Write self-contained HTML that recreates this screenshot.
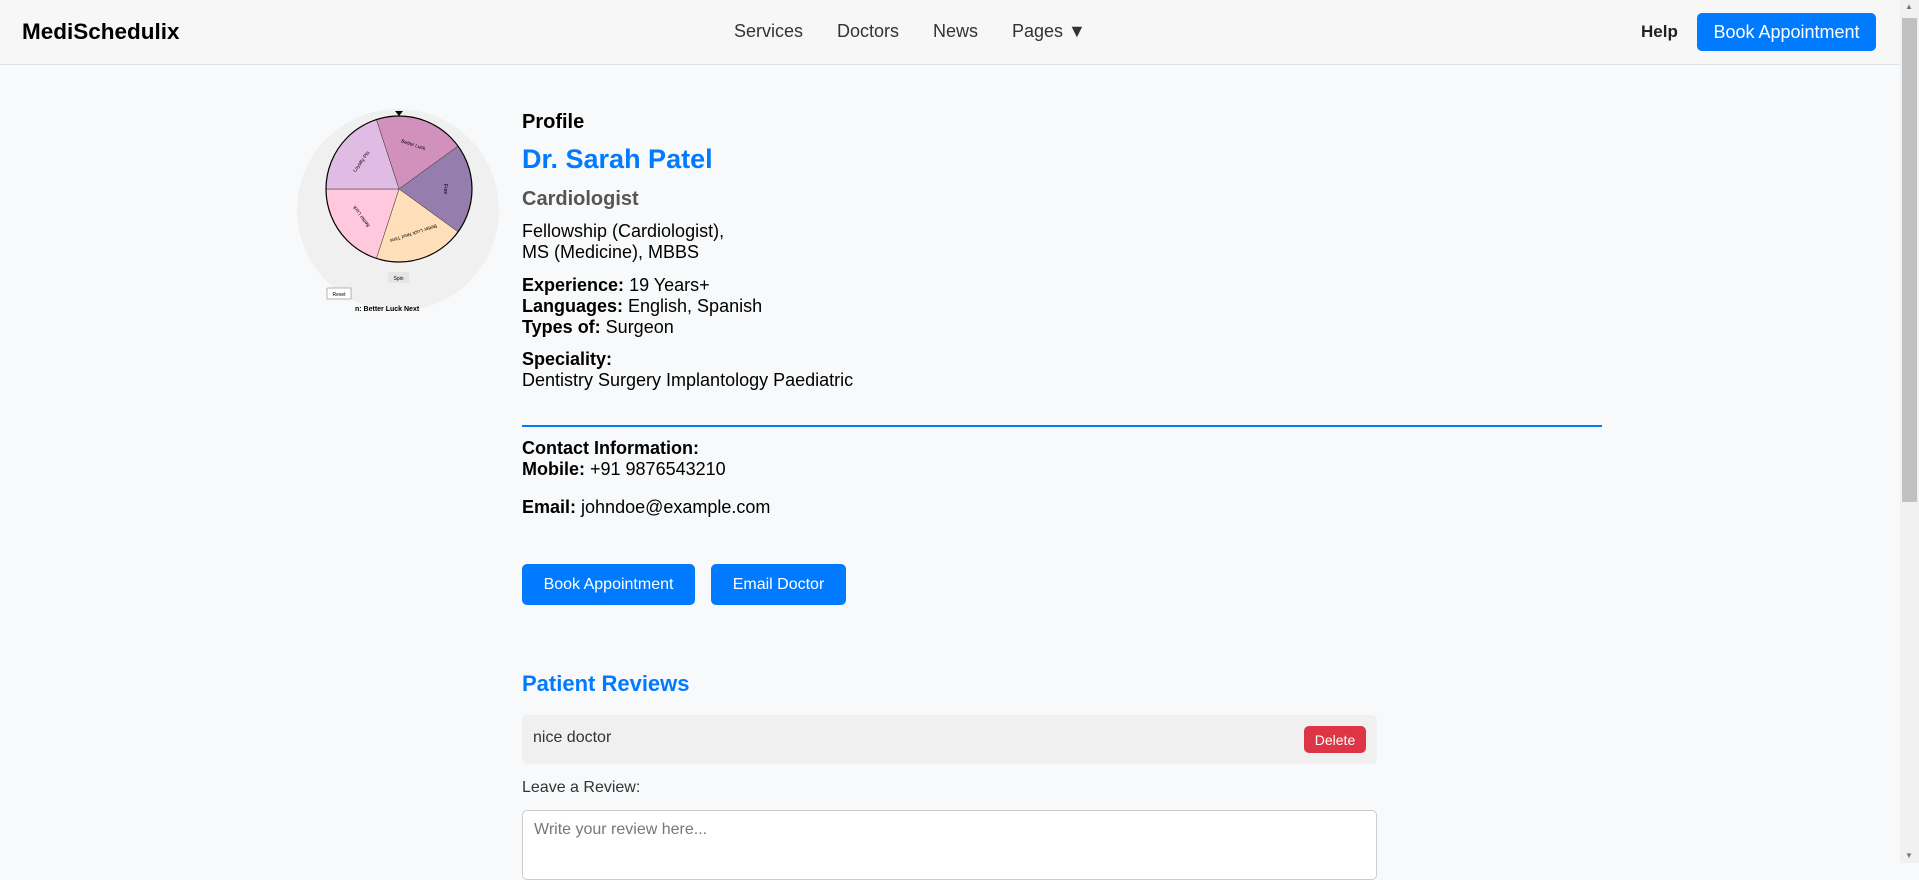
<!DOCTYPE html>
<html><head><meta charset="utf-8"><style>
*{box-sizing:border-box;margin:0;padding:0}
body{width:1919px;height:863px;overflow:hidden;background:#f8f9fa;font-family:"Liberation Sans",Arial,sans-serif;color:#000;position:relative}
.a{position:absolute;white-space:nowrap}
.hdr{position:absolute;left:0;top:0;width:1900px;height:65px;background:#f7f7f7;border-bottom:1px solid #dde2e6}
.btn{position:absolute;background:#007bff;color:#fff;border-radius:5px;display:flex;align-items:center;justify-content:center;font-size:16px}
.t{font-size:18px;line-height:21px}
b{font-weight:bold}
</style></head><body>
<div class="hdr"></div>
<div class="a" style="left:22px;top:19px;font-size:22.5px;font-weight:bold">MediSchedulix</div>
<div class="a" style="left:734px;top:21px;font-size:18px;color:#333">Services</div>
<div class="a" style="left:837px;top:21px;font-size:18px;color:#333">Doctors</div>
<div class="a" style="left:933px;top:21px;font-size:18px;color:#333">News</div>
<div class="a" style="left:1012px;top:21px;font-size:18px;color:#333">Pages ▼</div>
<div class="a" style="left:1641px;top:22px;font-size:17px;font-weight:bold;color:#222">Help</div>
<div class="btn" style="left:1697px;top:13px;width:179px;height:38px;font-size:18px">Book Appointment</div>
<div style="position:absolute;left:1900px;top:0;width:19px;height:863px;background:#f1f1f1"></div>
<div style="position:absolute;left:1902px;top:18px;width:15px;height:484px;background:#c1c1c1"></div>
<div class="a" style="left:1905px;top:2px;font-size:8px;color:#777">▲</div>
<div class="a" style="left:1905px;top:851px;font-size:8px;color:#777">▼</div>

<svg style="position:absolute;left:0;top:0" width="520" height="320">
<defs><clipPath id="c"><rect x="290" y="100" width="220" height="213"/></clipPath></defs>
<circle cx="398" cy="210" r="101" fill="#f0f0f0" clip-path="url(#c)"/>
<g transform="translate(399,189)" stroke="#333" stroke-width="0.5">
<path d="M0 0 L-22.6 -69.4 A73 73 0 0 1 59.1 -42.9Z" fill="#d291bc"/>
<path d="M0 0 L59.1 -42.9 A73 73 0 0 1 59.1 42.9Z" fill="#957dad"/>
<path d="M0 0 L59.1 42.9 A73 73 0 0 1 -22.6 69.4Z" fill="#ffdfba"/>
<path d="M0 0 L-22.6 69.4 A73 73 0 0 1 -73 0Z" fill="#ffc8dd"/>
<path d="M0 0 L-73 0 A73 73 0 0 1 -22.6 -69.4Z" fill="#e0bbe4"/>
<circle r="73" fill="none" stroke="#000" stroke-width="1.2"/>
<g font-size="5" fill="#000" stroke="none" text-anchor="middle">
<text transform="rotate(18) translate(0,-45)">Better Luck</text>
<text transform="rotate(90) translate(0,-45)">Free</text>
<text transform="rotate(162) translate(0,-45)">Better Luck Next Time</text>
<text transform="rotate(234) translate(0,-45)">Better Luck</text>
<text transform="rotate(306) translate(0,-45)">Loyalty Pts</text>
</g></g>
<path d="M395 111 L403 111 L399 116Z" fill="#000"/>
<rect x="388" y="272" width="21" height="11" fill="#e5e5e5"/>
<text x="398.5" y="280" font-size="5" text-anchor="middle" font-family="Liberation Sans">Spin</text>
<rect x="327" y="288" width="24" height="11" fill="#fff" stroke="#888" stroke-width="0.6"/>
<text x="339" y="296" font-size="5" text-anchor="middle" font-family="Liberation Sans">Reset</text>
<text x="355" y="311" font-size="7" font-weight="bold" font-family="Liberation Sans">n: Better Luck Next</text>
</svg>

<div class="a" style="left:522px;top:111px;font-size:20px;font-weight:bold">Profile</div>
<div class="a" style="left:522px;top:144px;font-size:27px;font-weight:bold;color:#007bff">Dr. Sarah Patel</div>
<div class="a" style="left:522px;top:188px;font-size:20px;font-weight:bold;color:#555">Cardiologist</div>
<div class="a t" style="left:522px;top:221px">Fellowship (Cardiologist),<br>MS (Medicine), MBBS</div>
<div class="a t" style="left:522px;top:275px"><b>Experience:</b> 19 Years+<br><b>Languages:</b> English, Spanish<br><b>Types of:</b> Surgeon</div>
<div class="a t" style="left:522px;top:349px"><b>Speciality:</b><br>Dentistry Surgery Implantology Paediatric</div>
<div style="position:absolute;left:522px;top:425px;width:1080px;height:2px;background:#007bff"></div>
<div class="a t" style="left:522px;top:438px"><b>Contact Information:</b><br><b>Mobile:</b> +91 9876543210</div>
<div class="a t" style="left:522px;top:497px"><b>Email:</b> johndoe@example.com</div>
<div class="btn" style="left:522px;top:564px;width:173px;height:41px">Book Appointment</div>
<div class="btn" style="left:711px;top:564px;width:135px;height:41px">Email Doctor</div>
<div class="a" style="left:522px;top:671px;font-size:22px;font-weight:bold;color:#007bff">Patient Reviews</div>
<div style="position:absolute;left:522px;top:715px;width:855px;height:49px;background:#f0f0f0;border-radius:5px"></div>
<div class="a" style="left:533px;top:729px;font-size:16px;color:#333">nice doctor</div>
<div class="btn" style="left:1304px;top:726px;width:62px;height:27px;background:#dc3545;font-size:14px">Delete</div>
<div class="a" style="left:522px;top:779px;font-size:16px;color:#333">Leave a Review:</div>
<div style="position:absolute;left:522px;top:810px;width:855px;height:70px;background:#fff;border:1px solid #ccc;border-radius:5px"></div>
<div class="a" style="left:534px;top:821px;font-size:16px;color:#777">Write your review here...</div>
</body></html>
